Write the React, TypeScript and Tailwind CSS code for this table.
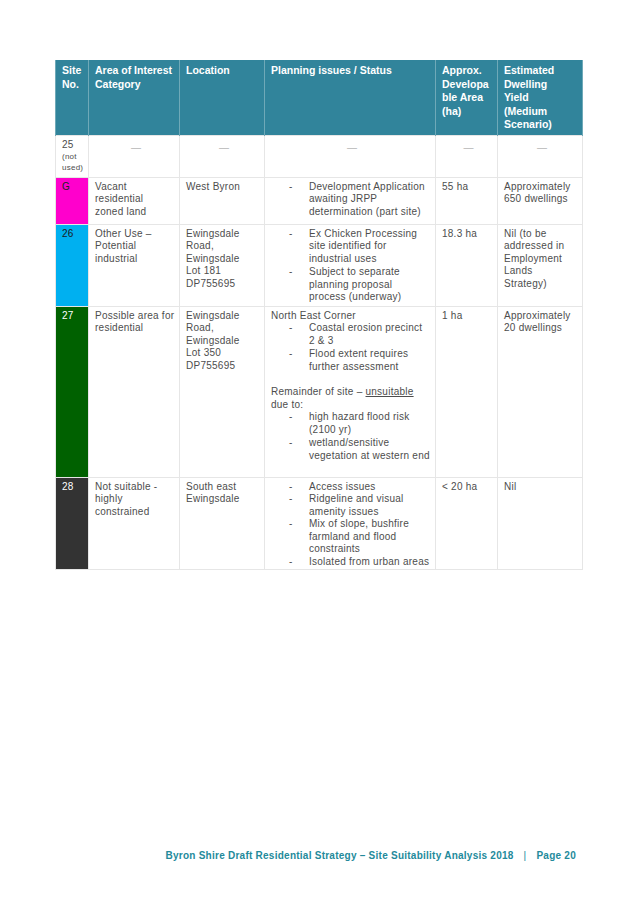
import React from "react";

const FONT = { fontFamily: '"Liberation Sans", Arial, sans-serif' };

function Bullets({ items }: { items: string[] }) {
  return (
    <ul className="space-y-[1px]">
      {items.map((t) => (
        <li key={t} className="flex">
          <span className="w-[18px] shrink-0" />
          <span className="w-[20px] shrink-0">-</span>
          <span className="whitespace-pre-line">{t}</span>
        </li>
      ))}
    </ul>
  );
}

function Dash() {
  return <div className="text-center text-[#b5b5b5] pt-[3px]">—</div>;
}

const td = "border border-[#e6e6e6] align-top pl-[6px] pr-[2px] pt-[3px]";

export default function App() {
  return (
    <div
      className="min-h-[902px] w-[637px] bg-white text-[10px] leading-[12.5px] text-[#4d4d4d] tracking-[0.25px]"
      style={FONT}
    >
      <div className="pt-[60px] pl-[55px]">
        <table className="table-fixed border-collapse w-[527px]">
          <colgroup>
            <col className="w-[33px]" />
            <col className="w-[91px]" />
            <col className="w-[85px]" />
            <col className="w-[171px]" />
            <col className="w-[62px]" />
            <col className="w-[85px]" />
          </colgroup>
          <thead>
            <tr className="h-[75px] bg-[#31849b] text-white font-bold text-[10.5px] leading-[13.5px] tracking-normal">
              {[
                "Site\nNo.",
                "Area of Interest\nCategory",
                "Location",
                "Planning issues / Status",
                "Approx.\nDevelopa\nble Area\n(ha)",
                "Estimated\nDwelling\nYield\n(Medium\nScenario)",
              ].map((h) => (
                <th
                  key={h}
                  className="border-x border-[#6fa9b8] align-top text-left font-bold pl-[6px] pr-[2px] pt-[4px] whitespace-pre-line"
                >
                  {h}
                </th>
              ))}
            </tr>
          </thead>
          <tbody>
            <tr className="h-[42px]">
              <td className={td}>
                <div>25</div>
                <div className="text-[8px] leading-[11px]">
                  (not
                  <br />
                  used)
                </div>
              </td>
              <td className={td}><Dash /></td>
              <td className={td}><Dash /></td>
              <td className={td}><Dash /></td>
              <td className={td}><Dash /></td>
              <td className={td}><Dash /></td>
            </tr>

            <tr className="h-[47px]">
              <td className={`${td} bg-[#ff00cc] text-[#222]`}>G</td>
              <td className={td}>
                Vacant
                <br />
                residential
                <br />
                zoned land
              </td>
              <td className={td}>West Byron</td>
              <td className={td}>
                <Bullets
                  items={["Development Application\nawaiting JRPP\ndetermination (part site)"]}
                />
              </td>
              <td className={td}>55 ha</td>
              <td className={td}>
                Approximately
                <br />
                650 dwellings
              </td>
            </tr>

            <tr className="h-[82px]">
              <td className={`${td} bg-[#00b0f0] text-[#1a1a1a]`}>26</td>
              <td className={td}>
                Other Use –
                <br />
                Potential
                <br />
                industrial
              </td>
              <td className={td}>
                Ewingsdale
                <br />
                Road,
                <br />
                Ewingsdale
                <br />
                Lot 181
                <br />
                DP755695
              </td>
              <td className={td}>
                <Bullets
                  items={[
                    "Ex Chicken Processing\nsite identified for\nindustrial uses",
                    "Subject to separate\nplanning proposal\nprocess (underway)",
                  ]}
                />
              </td>
              <td className={td}>18.3 ha</td>
              <td className={td}>
                Nil (to be
                <br />
                addressed in
                <br />
                Employment
                <br />
                Lands
                <br />
                Strategy)
              </td>
            </tr>

            <tr className="h-[171px]">
              <td className={`${td} bg-[#006100] text-white`}>27</td>
              <td className={td}>
                <span className="whitespace-nowrap">Possible area for</span>
                <br />
                residential
              </td>
              <td className={td}>
                Ewingsdale
                <br />
                Road,
                <br />
                Ewingsdale
                <br />
                Lot 350
                <br />
                DP755695
              </td>
              <td className={td}>
                <div>North East Corner</div>
                <Bullets
                  items={[
                    "Coastal erosion precinct\n2 & 3",
                    "Flood extent requires\nfurther assessment",
                  ]}
                />
                <div className="mt-[12px] leading-[13px]">
                  Remainder of site – <span className="underline">unsuitable</span>
                  <br />
                  due to:
                </div>
                <Bullets
                  items={[
                    "high hazard flood risk\n(2100 yr)",
                    "wetland/sensitive\nvegetation at western end",
                  ]}
                />
              </td>
              <td className={td}>1 ha</td>
              <td className={td}>
                Approximately
                <br />
                20 dwellings
              </td>
            </tr>

            <tr className="h-[92px]">
              <td className={`${td} bg-[#333333] text-white`}>28</td>
              <td className={td}>
                Not suitable -
                <br />
                highly
                <br />
                constrained
              </td>
              <td className={td}>
                South east
                <br />
                Ewingsdale
              </td>
              <td className={td}>
                <ul>
                  {[
                    "Access issues",
                    "Ridgeline and visual\namenity issues",
                    "Mix of slope, bushfire\nfarmland and flood\nconstraints",
                    "Isolated from urban areas",
                  ].map((t) => (
                    <li key={t} className="flex">
                      <span className="w-[18px] shrink-0" />
                      <span className="w-[20px] shrink-0">-</span>
                      <span className="whitespace-pre-line">{t}</span>
                    </li>
                  ))}
                </ul>
              </td>
              <td className={td}>&lt; 20 ha</td>
              <td className={td}>Nil</td>
            </tr>
          </tbody>
        </table>
      </div>

      <div className="mt-[280px] pr-[61px] flex justify-end text-[10px] font-bold text-[#238a9b] tracking-[0.25px]">
        <span>Byron Shire Draft Residential Strategy – Site Suitability Analysis 2018</span>
        <span className="px-[10px] font-normal">|</span>
        <span>Page 20</span>
      </div>
    </div>
  );
}
